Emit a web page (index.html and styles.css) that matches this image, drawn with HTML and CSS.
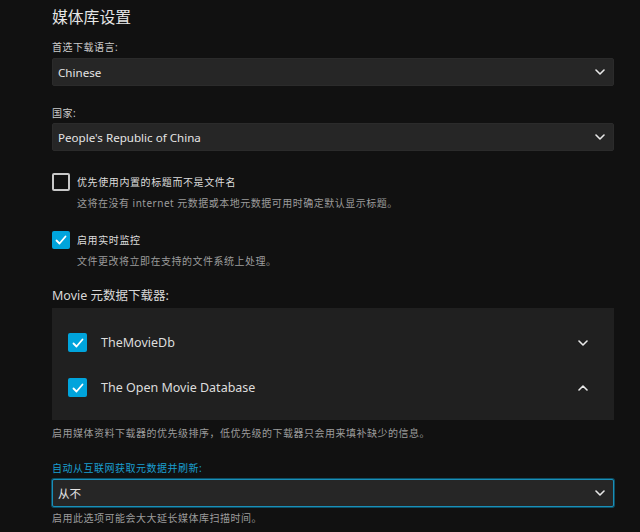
FILE: index.html
```html
<!DOCTYPE html>
<html lang="zh-CN">
<head>
<meta charset="utf-8">
<link rel="stylesheet" href="styles.css">
</head>
<body>
<div class="page">
  <h1 class="title">媒体库设置</h1>

  <div class="field field-lang">
    <div class="label">首选下载语言:</div>
    <div class="select">
      <span>Chinese</span>
      <svg class="chev" viewBox="0 0 10 6" width="10" height="6"><polyline points="1,1 5,5 9,1"/></svg>
    </div>
  </div>

  <div class="field field-country">
    <div class="label">国家:</div>
    <div class="select">
      <span>People's Republic of China</span>
      <svg class="chev" viewBox="0 0 10 6" width="10" height="6"><polyline points="1,1 5,5 9,1"/></svg>
    </div>
  </div>

  <div class="check check-1">
    <div class="check-row">
      <span class="box"></span>
      <span class="check-label">优先使用内置的标题而不是文件名</span>
    </div>
    <div class="desc indent">这将在没有 internet 元数据或本地元数据可用时确定默认显示标题。</div>
  </div>

  <div class="check check-2">
    <div class="check-row">
      <span class="box on"><svg viewBox="0 0 18 18" width="18" height="18"><polyline points="4.5,9.5 7.5,12.5 13.5,5.5"/></svg></span>
      <span class="check-label">启用实时监控</span>
    </div>
    <div class="desc indent">文件更改将立即在支持的文件系统上处理。</div>
  </div>

  <div class="heading">Movie 元数据下载器:</div>
  <div class="panel">
    <div class="panel-row">
      <span class="box on"><svg viewBox="0 0 18 18" width="18" height="18"><polyline points="4.5,9.5 7.5,12.5 13.5,5.5"/></svg></span>
      <span class="panel-text">TheMovieDb</span>
      <svg class="chev small" viewBox="0 0 10 6" width="10" height="6"><polyline points="1,1 5,5 9,1"/></svg>
    </div>
    <div class="panel-row">
      <span class="box on"><svg viewBox="0 0 18 18" width="18" height="18"><polyline points="4.5,9.5 7.5,12.5 13.5,5.5"/></svg></span>
      <span class="panel-text">The Open Movie Database</span>
      <svg class="chev small" viewBox="0 0 10 6" width="10" height="6"><polyline points="1,5 5,1 9,5"/></svg>
    </div>
  </div>
  <div class="desc after-panel">启用媒体资料下载器的优先级排序，低优先级的下载器只会用来填补缺少的信息。</div>

  <div class="field field-refresh">
    <div class="label blue">自动从互联网获取元数据并刷新:</div>
    <div class="select focused">
      <span>从不</span>
      <svg class="chev" viewBox="0 0 10 6" width="10" height="6"><polyline points="1,1 5,5 9,1"/></svg>
    </div>
    <div class="desc after-select">启用此选项可能会大大延长媒体库扫描时间。</div>
  </div>
</div>
</body>
</html>
```

FILE: styles.css
```css
html, body {
  margin: 0;
  padding: 0;
  background: #111111;
}
body {
  font-family: "Noto Sans", "Noto Sans CJK SC", sans-serif;
  color: #dddddd;
  text-spacing-trim: space-all;
}
.page {
  width: 562px;
  padding-left: 52px;
}
.title {
  margin: 0;
  padding-top: 5px;
  font-size: 15.8px;
  line-height: 24px;
  font-weight: normal;
  color: #e6e6e6;
}
.label {
  font-size: 10px;
  letter-spacing: 0.5px;
  line-height: 18px;
  color: #cccccc;
}
.label.blue {
  color: #1a9fd0;
}
.select {
  height: 28px;
  box-sizing: border-box;
  background: #262626;
  border: 1px solid #2b2b2b;
  border-radius: 2px;
  display: flex;
  align-items: center;
  justify-content: space-between;
  padding: 0 8px 0 5px;
  font-size: 11.6px;
  color: #e4e4e4;
}
.select.focused {
  border: 1px solid #1a8fb8;
  box-shadow: 0 0 0 1px #0c4f66;
}
.chev {
  fill: none;
  stroke: #e8e8e8;
  stroke-width: 1.6;
  stroke-linecap: round;
  stroke-linejoin: round;
}
.field-lang { margin-top: 9px; }
.field-lang .select { margin-top: 2px; }
.field-country { margin-top: 18px; }
.field-country .select { margin-top: 1px; }

.check-1 { margin-top: 22px; }
.check-2 { margin-top: 19px; }
.check-row {
  display: flex;
  align-items: center;
  gap: 7px;
  height: 18px;
}
.box {
  width: 18px;
  height: 18px;
  box-sizing: border-box;
  border: 2px solid #c8c8c8;
  border-radius: 2px;
  flex: none;
  display: flex;
  align-items: center;
  justify-content: center;
}
.box.on {
  background: #00a4dc;
  border: none;
}
.box svg {
  fill: none;
  stroke: #ffffff;
  stroke-width: 1.8;
  stroke-linecap: round;
  stroke-linejoin: round;
}
.check-label {
  font-size: 10px;
  letter-spacing: 0.6px;
  line-height: 18px;
  color: #dddddd;
}
.desc {
  font-size: 10px;
  letter-spacing: 0.5px;
  line-height: 18px;
  color: #9c9c9c;
}
.indent {
  margin-top: 3px;
  padding-left: 25px;
}
.heading {
  margin-top: 16px;
  font-size: 12.5px;
  line-height: 20px;
  color: #d8d8d8;
}
.panel {
  margin-top: 2px;
  background: #202020;
  padding: 12px 0 10px 16px;
}
.panel-row {
  height: 45px;
  display: flex;
  align-items: center;
}
.panel-row .box {
  width: 19px;
  height: 19px;
}
.panel-text {
  margin-left: 14px;
  flex: 1;
  font-size: 12.5px;
  color: #dddddd;
}
.chev.small {
  margin-right: 26px;
}
.after-panel {
  margin-top: 4px;
}
.field-refresh {
  margin-top: 17px;
}
.field-refresh .select {
  margin-top: 2px;
}
.after-select {
  margin-top: 2px;
}
```
